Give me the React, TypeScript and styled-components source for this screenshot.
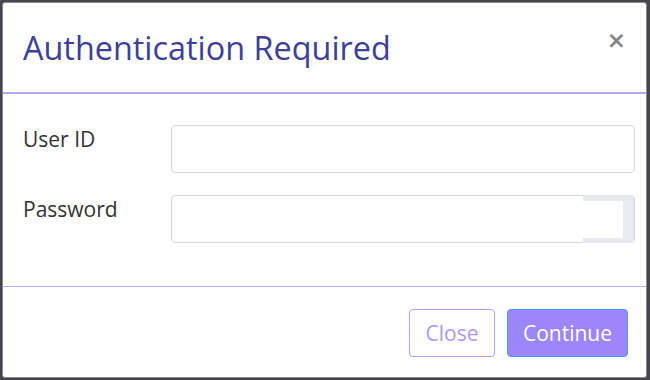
import styled, { createGlobalStyle } from "styled-components";

const GlobalStyle = createGlobalStyle`
  html, body {
    margin: 0;
    padding: 0;
    background: #45444f;
    font-family: "Open Sans", "Liberation Sans", sans-serif;
  }
`;

const Backdrop = styled.div`
  width: 650px;
  height: 380px;
  padding: 2px 3px 2px 2px;
  box-sizing: border-box;
`;

const Modal = styled.div`
  height: 100%;
  background: #fff;
  border: 1px solid #8a8a8a;
  border-radius: 3px;
  box-sizing: border-box;
  display: flex;
  flex-direction: column;
`;

const Header = styled.div`
  height: 89px;
  display: flex;
  align-items: center;
  justify-content: space-between;
  padding: 0 20px 0 20px;
  border-bottom: 2px solid #b2a7f6;
`;

const Title = styled.h1`
  margin: 0 0 2px 0;
  font-size: 32.4px;
  font-weight: 400;
  color: #3d3f98;
`;

const CloseX = styled.button`
  border: none;
  background: none;
  padding: 0;
  margin: 0 0 14px 0;
  font-family: "DejaVu Sans", sans-serif;
  font-size: 23px;
  font-weight: 700;
  color: #858585;
  line-height: 1;
`;

const Body = styled.div`
  flex: 1;
  display: flex;
  flex-direction: column;
  gap: 22px;
  padding: 31px 11px 0 20px;
  border-bottom: 1px solid #b8aef5;
`;

const Row = styled.div`
  display: grid;
  grid-template-columns: 148px 1fr;
  align-items: start;
`;

const Label = styled.label`
  font-size: 21px;
  color: #333;
  padding-top: 0;
`;

const FieldWrap = styled.div`
  position: relative;
`;

const Input = styled.input`
  display: block;
  width: 100%;
  height: 48px;
  box-sizing: border-box;
  border: 1px solid #d3d6da;
  border-radius: 4px;
  font-size: 18px;
  padding: 0 12px;
  background: #fff;
`;

const RevealBox = styled.span`
  position: absolute;
  right: 1px;
  top: 0;
  width: 40px;
  height: 37px;
  border-top: 6px solid #e7eaee;
  border-bottom: 5px solid #e7eaee;
  border-right: 11px solid #e7eaee;
  background: #fff;
`;

const Footer = styled.div`
  height: 90px;
  box-sizing: border-box;
  display: flex;
  align-items: center;
  justify-content: flex-end;
  gap: 12px;
  padding: 2px 18px 0 0;
`;

const Button = styled.button<{ $primary?: boolean }>`
  height: 48px;
  padding: 0 14px;
  font-family: "Open Sans", "Liberation Sans", sans-serif;
  font-size: 21px;
  border-radius: 4px;
  border: 1px solid ${(p) => (p.$primary ? "#4d9cf2" : "#b3a3f7")};
  background: ${(p) => (p.$primary ? "#9b86fb" : "#fff")};
  color: ${(p) => (p.$primary ? "#fff" : "#ab97f8")};
`;

export default function App() {
  return (
    <>
      <GlobalStyle />
      <Backdrop>
        <Modal>
          <Header>
            <Title>Authentication Required</Title>
            <CloseX aria-label="Close">×</CloseX>
          </Header>
          <Body>
            <Row>
              <Label>User ID</Label>
              <FieldWrap>
                <Input type="text" />
              </FieldWrap>
            </Row>
            <Row>
              <Label>Password</Label>
              <FieldWrap>
                <Input type="password" />
                <RevealBox />
              </FieldWrap>
            </Row>
          </Body>
          <Footer>
            <Button style={{ width: 86 }}>Close</Button>
            <Button $primary style={{ width: 121 }}>Continue</Button>
          </Footer>
        </Modal>
      </Backdrop>
    </>
  );
}
